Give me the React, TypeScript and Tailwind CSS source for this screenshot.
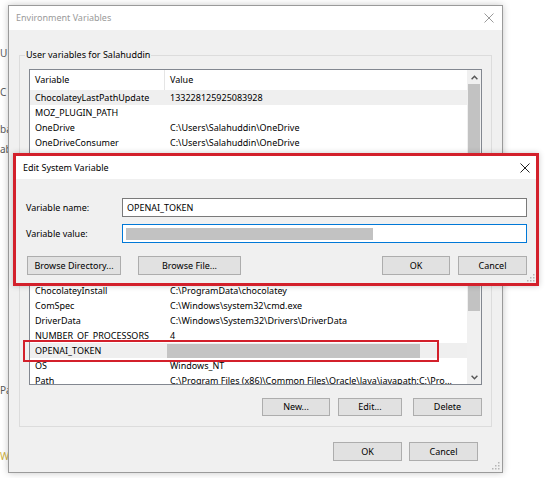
import React from 'react';

const FONT = "font-['Noto_Sans','Open_Sans',sans-serif]";

type Row = { name: string; value?: string; masked?: boolean; selected?: boolean };

const userRows: Row[] = [
  { name: 'ChocolateyLastPathUpdate', value: '133228125925083928', selected: true },
  { name: 'MOZ_PLUGIN_PATH', value: '' },
  { name: 'OneDrive', value: 'C:\\Users\\Salahuddin\\OneDrive' },
  { name: 'OneDriveConsumer', value: 'C:\\Users\\Salahuddin\\OneDrive' },
];

const systemRows: Row[] = [
  { name: 'ChocolateyInstall', value: 'C:\\ProgramData\\chocolatey' },
  { name: 'ComSpec', value: 'C:\\Windows\\system32\\cmd.exe' },
  { name: 'DriverData', value: 'C:\\Windows\\System32\\Drivers\\DriverData' },
  { name: 'NUMBER_OF_PROCESSORS', value: '4' },
  { name: 'OPENAI_TOKEN', masked: true, selected: true },
  { name: 'OS', value: 'Windows_NT' },
  { name: 'Path', value: 'C:\\Program Files (x86)\\Common Files\\Oracle\\Java\\javapath;C:\\Pro...' },
];

function CloseX({ className }: { className?: string }) {
  return (
    <svg width="10" height="10" viewBox="0 0 10 10" className={className}>
      <path d="M0.5 0.5L9.5 9.5M9.5 0.5L0.5 9.5" stroke="currentColor" strokeWidth="1" fill="none" />
    </svg>
  );
}

function Chevron({ dir }: { dir: 'up' | 'down' }) {
  return (
    <svg width="7" height="5" viewBox="0 0 7 5">
      <path
        d={dir === 'up' ? 'M0.6 4.3L3.5 1.2L6.4 4.3' : 'M0.6 0.7L3.5 3.8L6.4 0.7'}
        stroke="#555"
        strokeWidth="1.4"
        fill="none"
      />
    </svg>
  );
}

function Grip({ className }: { className?: string }) {
  return (
    <svg width="8" height="8" viewBox="0 0 8 8" className={className}>
      <g fill="#b5b5b5">
        <rect x="6" y="0" width="1.5" height="1.5" />
        <rect x="3" y="3" width="1.5" height="1.5" />
        <rect x="6" y="3" width="1.5" height="1.5" />
        <rect x="0" y="6" width="1.5" height="1.5" />
        <rect x="3" y="6" width="1.5" height="1.5" />
        <rect x="6" y="6" width="1.5" height="1.5" />
      </g>
    </svg>
  );
}

function Btn({ children, className = '' }: { children: React.ReactNode; className?: string }) {
  return (
    <div className={`flex items-center justify-center border border-[#adadad] bg-[#e1e1e1] text-black ${className}`}>
      {children}
    </div>
  );
}

interface ListProps {
  rows: Row[];
  className: string;
  thumbClass: string;
  header?: boolean;
  up?: boolean;
  down?: boolean;
}

function VarList({ rows, className, thumbClass, header, up, down }: ListProps) {
  return (
    <div className={`flex overflow-hidden border border-[#828790] bg-white ${className}`}>
      <div className="flex-1 overflow-hidden">
        {header && (
          <div className="flex h-[20px] items-center">
            <div className="w-[134px] pl-[5px]">Variable</div>
            <div className="h-full w-px bg-[#e5e5e5]" />
            <div className="pl-[5px]">Value</div>
          </div>
        )}
        {rows.map((r) => (
          <div
            key={r.name}
            className={`flex h-[15px] items-center whitespace-nowrap ${r.selected ? 'bg-[#efefef]' : ''}`}
          >
            <div className="w-[135px] shrink-0 pl-[5px]">{r.name}</div>
            {r.masked ? (
              <div className="ml-[2px] h-[14px] w-[253px] bg-[#c4c4c4]" />
            ) : (
              <div className="pl-[5px]">{r.value}</div>
            )}
          </div>
        ))}
      </div>
      <div className="flex w-[14px] shrink-0 flex-col bg-[#f0f0f0]">
        {up && (
          <div className="flex h-[14px] shrink-0 items-center justify-center">
            <Chevron dir="up" />
          </div>
        )}
        <div className={`mx-[1px] shrink-0 bg-[#c2c2c2] ${thumbClass}`} />
        <div className="flex-1" />
        {down && (
          <div className="flex h-[14px] shrink-0 items-center justify-center">
            <Chevron dir="down" />
          </div>
        )}
      </div>
    </div>
  );
}

export default function App() {
  return (
    <div className={`relative h-[478px] w-[550px] overflow-hidden bg-white text-[9px] text-black ${FONT}`}>
      {/* window behind */}
      <div className="absolute left-0 top-0 z-0 text-[10px] text-[#5a5a5a]">
        <div className="absolute left-[0px] top-[46px]">U</div>
        <div className="absolute left-[0px] top-[85px]">C</div>
        <div className="absolute left-[0px] top-[122px]">ba</div>
        <div className="absolute left-[0px] top-[142px]">ab</div>
        <div className="absolute left-[0px] top-[383px]">Pa</div>
        <div className="absolute left-[0px] top-[449px] text-[#cdb040]">W</div>
      </div>

      {/* Environment Variables window */}
      <div className="absolute left-[8px] top-[5px] z-10 flex h-[468px] w-[495px] flex-col border border-[#9a9a9a] bg-[#f0f0f0] shadow-[0_0_7px_rgba(0,0,0,0.22)]">
        <div className="flex h-[24px] shrink-0 items-center justify-between bg-white pl-[7px] pr-[8px] text-[#9a9a9a]">
          <span>Environment Variables</span>
          <CloseX />
        </div>
        <div className="flex flex-1 flex-col px-[10px]">
          <div className="mt-[25px] flex flex-col border border-[#dcdcdc] px-[9px] pb-[10px]">
            <div className="-mt-[8px] -ml-[4px] w-fit bg-[#f0f0f0] px-[1px] leading-[14px]">
              User variables for Salahuddin
            </div>
            <VarList rows={userRows} className="mt-[7px] h-[131px]" thumbClass="h-[200px]" header up />
            <VarList rows={systemRows} className="mt-[82px] h-[103px]" thumbClass="h-[28px]" down />
            <div className="mt-[13px] flex h-[18px] justify-end">
              <Btn className="w-[68px]">New...</Btn>
              <Btn className="ml-[8px] w-[64px]">Edit...</Btn>
              <Btn className="ml-[11px] w-[69px]">Delete</Btn>
            </div>
          </div>
          <div className="mt-[15px] flex h-[19px] justify-end pr-[14px]">
            <Btn className="w-[69px]">OK</Btn>
            <Btn className="ml-[7px] w-[69px]">Cancel</Btn>
          </div>
        </div>
        <Grip className="absolute bottom-[2px] right-[2px]" />
      </div>

      {/* highlight around OPENAI_TOKEN row */}
      <div className="absolute left-[23px] top-[340px] z-[15] h-[22px] w-[416px] border-2 border-[#d3202b]" />

      {/* Edit System Variable dialog with red frame */}
      <div className="absolute left-[13px] top-[153px] z-20 flex h-[133px] w-[526px] flex-col border-[3px] border-[#d3202b] shadow-[0_0_6px_rgba(0,0,0,0.2)]">
        <div className="flex h-[23px] shrink-0 items-center justify-between bg-white pl-[7px] pr-[6px]">
          <span>Edit System Variable</span>
          <CloseX className="text-[#222]" />
        </div>
        <div className="relative flex flex-1 flex-col bg-[#f0f0f0] pl-[10px] pr-[9px] pt-[19px]">
          <div className="flex h-[19px] items-center">
            <div className="w-[96px]">Variable name:</div>
            <div className="flex h-full flex-1 items-center border border-[#7a7a7a] bg-white pl-[4px]">OPENAI_TOKEN</div>
          </div>
          <div className="mt-[7px] flex h-[19px] items-center">
            <div className="w-[96px]">Variable value:</div>
            <div className="flex h-full flex-1 items-center border border-[#0078d7] bg-white pl-[3px]">
              <div className="h-[12px] w-[247px] bg-[#c2c2c2]" />
            </div>
          </div>
          <div className="mt-[13px] flex h-[19px]">
            <Btn className="ml-[1px] w-[94px]">Browse Directory...</Btn>
            <Btn className="ml-[17px] w-[103px]">Browse File...</Btn>
            <div className="flex-1" />
            <Btn className="w-[68px] border-[#0078d7]">OK</Btn>
            <Btn className="ml-[8px] w-[69px]">Cancel</Btn>
          </div>
          <Grip className="absolute bottom-[1px] right-[1px]" />
        </div>
      </div>
    </div>
  );
}
